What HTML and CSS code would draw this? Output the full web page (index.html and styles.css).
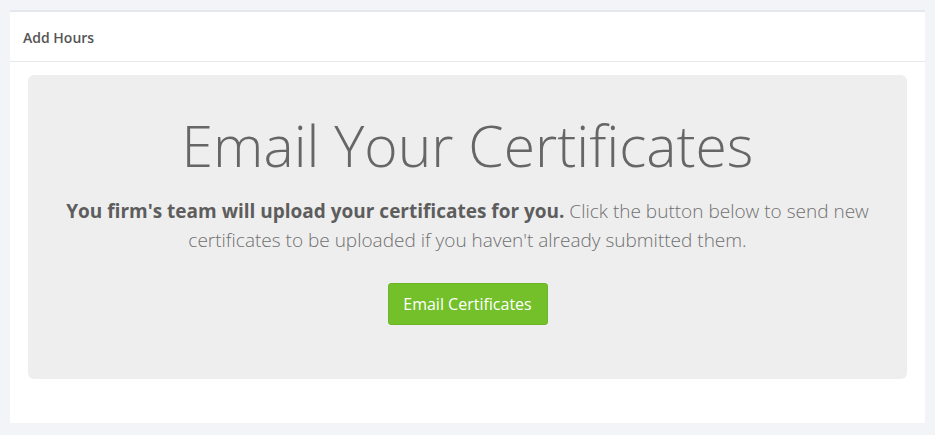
FILE: index.html
```html
<!DOCTYPE html>
<html lang="en">
<head>
    <meta charset="UTF-8">
    <meta name="viewport" content="width=device-width, initial-scale=1.0">
    <title>Add Hours</title>
    <link rel="stylesheet" href="styles.css">
</head>
<body>
    <div class="panel">
        <div class="panel-heading">Add Hours</div>
        <div class="panel-body">
            <div class="jumbotron">
                <h1>Email Your Certificates</h1>
                <p><strong>You firm's team will upload your certificates for you.</strong> Click the button below to send new certificates to be uploaded if you haven't already submitted them.</p>
                <button class="btn-email">Email Certificates</button>
            </div>
        </div>
    </div>
</body>
</html>
```

FILE: styles.css
```css
body {
    margin: 0;
    padding: 10px;
    background-color: #f3f4f8;
    font-family: "Open Sans", Arial, sans-serif;
    color: #555;
}
.panel {
    background-color: #fff;
    border-top: 2px solid #e4e7ec;
    height: 413px;
    box-sizing: border-box;
}
.panel-heading {
    height: 50px;
    box-sizing: border-box;
    padding: 1px 13px 0;
    display: flex;
    align-items: center;
    font-size: 14px;
    font-weight: 600;
    color: #555;
    border-bottom: 1px solid #e7e8ea;
}
.panel-body {
    padding: 13px 18px;
}
.jumbotron {
    background-color: #eeeeee;
    border-radius: 6px;
    height: 304px;
    box-sizing: border-box;
    padding: 28px 30px 0;
    text-align: center;
}
.jumbotron h1 {
    margin: 0;
    font-size: 57px;
    font-weight: 300;
    line-height: 84px;
    color: #666;
}
.jumbotron p {
    margin: 10px 0 28px;
    font-size: 19px;
    font-weight: 300;
    line-height: 29px;
    color: #707070;
}
.jumbotron p strong {
    font-weight: 700;
    color: #5d5d5d;
}
.btn-email {
    background-color: #73c02b;
    border: 1px solid #6db628;
    border-radius: 3px;
    color: #fff;
    font-family: "Open Sans", Arial, sans-serif;
    font-size: 16px;
    padding: 0 14px;
    height: 42px;
    width: 160px;
    cursor: pointer;
}
```
